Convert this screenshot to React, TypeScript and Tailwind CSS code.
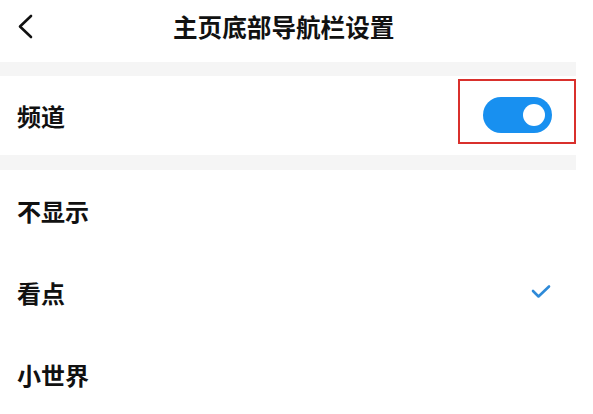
const items = [
  { label: "不显示", checked: false },
  { label: "看点", checked: true },
  { label: "小世界", checked: false },
];

const App = () => {
  return (
    <div
      className="w-[593px] h-[414px] overflow-hidden bg-white text-[#111]"
      style={{ fontFamily: '"Noto Sans CJK SC", "Noto Sans", sans-serif' }}
    >
      <div className="w-[576px]">
        {/* header */}
        <div className="h-[62px] flex items-center pb-[10px]">
          <div className="w-[173px] pl-[17px] flex items-center">
            <svg width="17" height="25" viewBox="0 0 17 25" fill="none">
              <polyline
                points="14,2 3,12.5 14,23"
                stroke="#111"
                strokeWidth="2.6"
                strokeLinecap="round"
                strokeLinejoin="round"
              />
            </svg>
          </div>
          <h1 className="text-[24.6px] font-bold leading-none">主页底部导航栏设置</h1>
        </div>

        <div className="h-[14px] bg-[#f5f5f5]" />

        {/* channel toggle row */}
        <div className="h-[79px] flex justify-between pl-[17px]">
          <span className="self-center text-[24px] font-bold leading-none">频道</span>
          <div className="mt-[3px] w-[118px] h-[65px] border-2 border-[#d9302c] flex justify-center pt-[16px]">
            <div className="w-[69px] h-[36px] rounded-full bg-[#1890f0] flex items-center justify-end pr-[7px]">
              <div className="w-[22px] h-[22px] rounded-full bg-white" />
            </div>
          </div>
        </div>

        <div className="h-[15px] bg-[#f5f5f5]" />

        {/* options */}
        {items.map((item) => (
          <div key={item.label} className="h-[82px] flex items-center justify-between pl-[17px] pr-[25px]">
            <span className="text-[24px] font-bold leading-none">{item.label}</span>
            {item.checked && (
              <svg width="20" height="15" viewBox="0 0 20 15" fill="none" className="-mt-[3px]">
                <polyline
                  points="2,7 7.5,12.5 18,2.5"
                  stroke="#2e8ad8"
                  strokeWidth="2.6"
                  strokeLinecap="round"
                  strokeLinejoin="round"
                />
              </svg>
            )}
          </div>
        ))}
      </div>
    </div>
  );
};

export default App;
